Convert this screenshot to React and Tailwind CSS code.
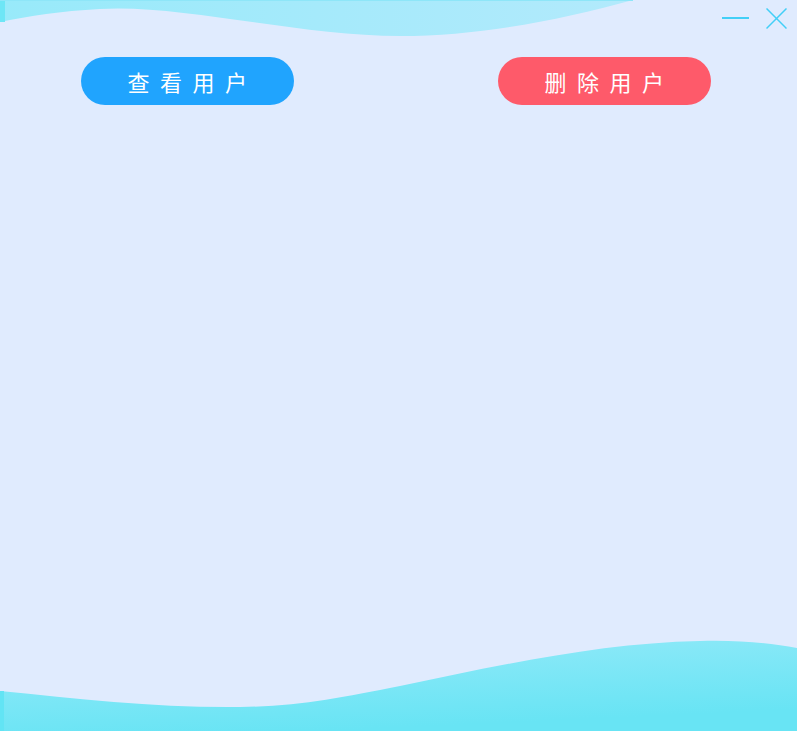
export default function App() {
  return (
    <div className="relative h-[731px] w-full overflow-hidden bg-[#e0ebfe] font-['Noto_Sans_CJK_SC','Noto_Sans',sans-serif]">
      {/* top wave */}
      <svg className="absolute left-0 top-0" width="797" height="40" viewBox="0 0 797 40">
        <defs>
          <linearGradient id="tw" x1="0" y1="0" x2="1" y2="0">
            <stop offset="0" stopColor="#98eafa" />
            <stop offset="1" stopColor="#b2eafc" />
          </linearGradient>
        </defs>
        <path d="M0 0 H633 C560 20 480 36 400 36 C300 36 180 4 100 9 C60 11 30 16 0 22 Z" fill="url(#tw)" />
        <rect x="0" y="0" width="5" height="22" fill="#6ee6f6" />
        <rect x="0" y="0" width="633" height="1" fill="#8ee6f8" />
      </svg>

      {/* bottom wave */}
      <svg className="absolute bottom-0 left-0" width="797" height="100" viewBox="0 631 797 100">
        <defs>
          <linearGradient id="bw" x1="0" y1="0" x2="0.4" y2="1">
            <stop offset="0" stopColor="#96eaf9" />
            <stop offset="1" stopColor="#68e4f4" />
          </linearGradient>
        </defs>
        <path d="M0 691 C80 699 160 708 240 707 C300 706 340 698 400 686 C500 665 600 643 700 641 C740 640 770 643 797 648 V731 H0 Z" fill="url(#bw)" />
        <rect x="0" y="691" width="4" height="40" fill="#62e4f4" />
      </svg>

      <div className="relative flex flex-col">
        <div className="flex h-[38px] items-center justify-end gap-[17px] pr-[10px]">
          <svg width="27" height="22" viewBox="0 0 27 22">
            <rect x="0" y="9" width="27" height="2" fill="#42cff7" />
          </svg>
          <svg width="21" height="22" viewBox="0 0 21 22">
            <path d="M0.5 0.5 L20.5 20.5 M20.5 0.5 L0.5 20.5" stroke="#42cff7" strokeWidth="1.5" />
          </svg>
        </div>
        <div className="mt-[19px] flex justify-between pl-[81px] pr-[86px]">
          <button className="flex h-[48px] w-[213px] items-center justify-center rounded-full bg-[#20a4fe] pl-[10px] text-[22px] tracking-[10.5px] text-white">
            查看用户
          </button>
          <button className="flex h-[48px] w-[213px] items-center justify-center rounded-full bg-[#fe5a6a] pl-[10px] text-[22px] tracking-[10.5px] text-white">
            删除用户
          </button>
        </div>
      </div>
    </div>
  );
}
